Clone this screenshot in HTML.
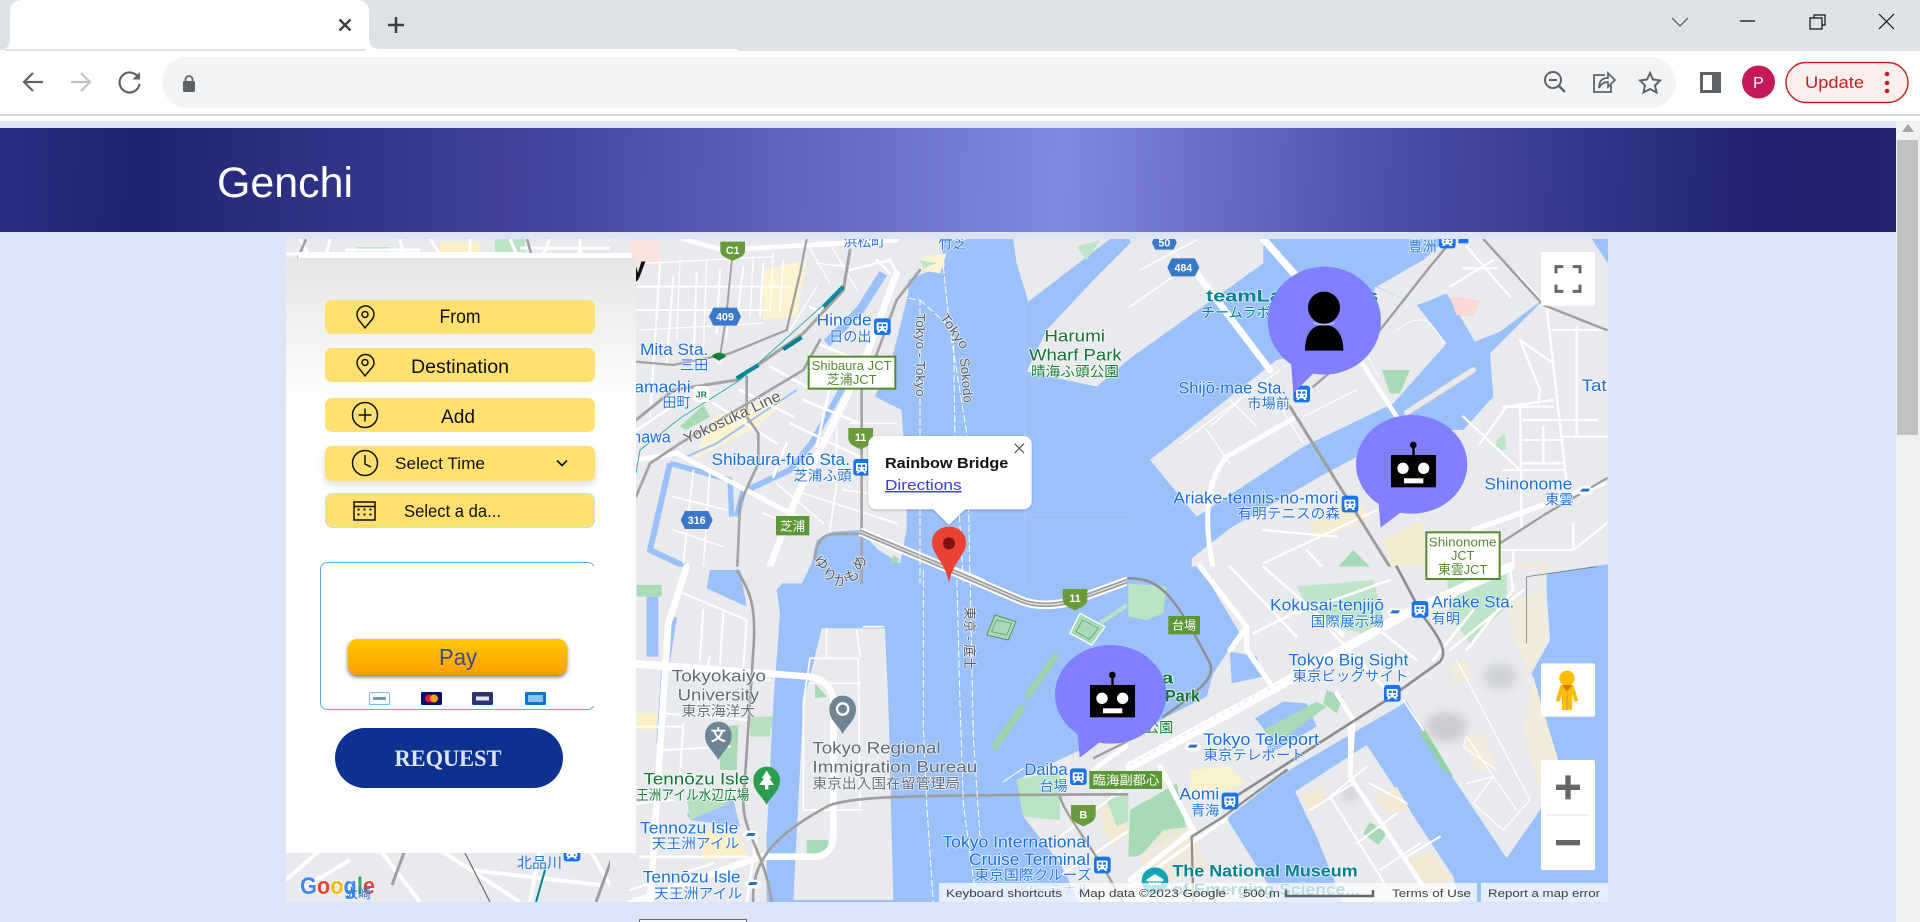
<!DOCTYPE html>
<html lang="en"><head><meta charset="utf-8"><title>Genchi</title>
<style>
html,body{margin:0;padding:0;width:1920px;height:922px;overflow:hidden;background:#dce4f8}
svg{position:absolute;left:0;top:0;display:block}
text{font-family:"Liberation Sans","Noto Sans CJK JP",sans-serif}
.l text{paint-order:stroke;stroke:#fff;stroke-width:5px;stroke-opacity:.7;stroke-linejoin:round}
.b{fill:#1a6fdc;font-size:50px}.bj{fill:#2a78d8;font-size:43px}
.g{fill:#137333;font-size:50px}.gj{fill:#188038;font-size:43px}
.gr{fill:#5f6b76;font-size:50px}.grj{fill:#66717c;font-size:43px}
.t{fill:#00838f;font-size:50px;font-weight:bold}
.sh{fill:#fff;font-size:32px;font-weight:bold;text-anchor:middle;stroke:none!important}
.rl{fill:#5c5c5c;font-size:40px}
.j{fill:#558b2f;font-size:40px;text-anchor:middle}
.lb{fill:#111;font-size:19px;-webkit-text-stroke:.4px #111;text-anchor:middle}
</style></head><body>
<svg width="1920" height="922" viewBox="0 0 1920 922" xmlns="http://www.w3.org/2000/svg">
<defs>
<clipPath id="mc"><rect x="286" y="239" width="1322" height="663"/></clipPath>
<filter id="bl" x="-50%" y="-50%" width="200%" height="200%"><feGaussianBlur stdDeviation="14"/></filter>
<filter id="ps" x="-20%" y="-20%" width="140%" height="150%"><feDropShadow dx="0" dy="2" stdDeviation="3" flood-color="#000" flood-opacity=".3"/></filter>
<filter id="ts" x="-10%" y="-30%" width="120%" height="170%"><feDropShadow dx="0" dy="3" stdDeviation="4" flood-color="#000" flood-opacity=".14"/></filter>
<filter id="pys" x="-10%" y="-20%" width="120%" height="160%"><feDropShadow dx="0" dy="2" stdDeviation="2" flood-color="#000" flood-opacity=".55"/></filter>
<linearGradient id="hg" gradientUnits="userSpaceOnUse" x1="0" y1="128" x2="1896" y2="190">
<stop offset="0" stop-color="#2b2f82"/><stop offset=".075" stop-color="#1e2371"/><stop offset=".3" stop-color="#45489f"/><stop offset=".56" stop-color="#8088e0"/><stop offset=".73" stop-color="#4d50a8"/><stop offset=".93" stop-color="#1e2270"/><stop offset="1" stop-color="#21256f"/></linearGradient>
<linearGradient id="pg" x1="0" y1="0" x2="0" y2="1"><stop offset="0" stop-color="#e5e5e5"/><stop offset=".25" stop-color="#fff"/></linearGradient>
<linearGradient id="py" x1="0" y1="0" x2="0" y2="1"><stop offset="0" stop-color="#ffc900"/><stop offset="1" stop-color="#ff9d00"/></linearGradient>
<g id="st"><rect x="-25" y="-25" width="50" height="50" rx="9" fill="#1a73e8"/><path d="M-13,-13h26a3,3 0 013,3v17a5,5 0 01-5,5l4,6h-7l-3,-5h-11l-3,5h-7l4,-6a5,5 0 01-5,-5v-17a3,3 0 013,-3z" fill="#fff"/><rect x="-11" y="-8" width="9" height="7" fill="#1a73e8"/><rect x="2" y="-8" width="9" height="7" fill="#1a73e8"/><circle cx="-8" cy="6" r="3" fill="#1a73e8"/><circle cx="8" cy="6" r="3" fill="#1a73e8"/></g>
<g id="mono"><ellipse rx="24" ry="14" fill="#fff"/><path d="M-15,3L-8,-6H15L10,3Z" fill="#2a6fc9"/></g>
<path id="shg" d="M-37,-28H37V2C37,22 16,28 0,36C-16,28 -37,22 -37,2Z" fill="#6a9a3c"/>
<path id="hex" d="M-35,-27H35L48,0L35,27H-35L-48,0Z" fill="#3a78c9"/>
<g id="robot"><ellipse cx="845" cy="703" rx="167" ry="148" fill="#8080ff"/><path d="M745,810L752,893L815,845Z" fill="#8080ff"/><rect x="783" y="675" width="135" height="97" fill="#000"/><rect x="847" y="645" width="7" height="32" fill="#000"/><circle cx="850" cy="645" r="10" fill="#000"/><circle cx="819" cy="715" r="17" fill="#fff"/><circle cx="881" cy="715" r="17" fill="#fff"/><rect x="822" y="745" width="58" height="15" fill="#fff"/></g>
</defs>

<rect width="1920" height="922" fill="#dce4f8"/>
<!-- browser chrome -->
<rect width="1920" height="51" fill="#dee1e6"/>
<path d="M0,50 Q10,50 10,38 V12 Q10,0 22,0 H357 Q369,0 369,12 V38 Q369,49 380,49 H736 L740,51 H0Z" fill="#fff"/>
<rect y="49" x="5" width="360" height="2" fill="#dee1e6"/>
<rect y="51" width="1920" height="63" fill="#fff"/>
<rect y="114" width="1920" height="2" fill="#dadada"/>
<rect y="116" width="1920" height="5" fill="#fff"/>
<path d="M339.500,19.500L350.500,30.500M350.500,19.500L339.500,30.500" stroke="#3c4043" stroke-width="2.400"/>
<path d="M396,17V33M388,25H404" stroke="#3c4043" stroke-width="2.600"/>
<path d="M1672,18L1680,26L1688,18" fill="none" stroke="#444" stroke-width="1"/>
<path d="M1740,21H1755" stroke="#111" stroke-width="1.300"/>
<path d="M1814,18V15H1825V25H1822M1810,18H1822V29H1810Z" fill="none" stroke="#111" stroke-width="1.200"/>
<path d="M1879,14L1894,29M1894,14L1879,29" stroke="#111" stroke-width="1.200"/>
<rect x="162" y="57" width="1514" height="51" rx="25.500" fill="#f1f3f4"/>
<path d="M43,82H24M33,73L24,82L33,91" fill="none" stroke="#5f6368" stroke-width="2.200"/>
<path d="M71,82H90M81,73L90,82L81,91" fill="none" stroke="#bdc1c6" stroke-width="2.200"/>
<path d="M138,77A10,10 0 1 0 139.500,84" fill="none" stroke="#5f6368" stroke-width="2.200"/><path d="M140,72V79.500H132.500Z" fill="#5f6368"/>
<rect x="183" y="81" width="12" height="11" rx="1.500" fill="#5f6368"/><path d="M185.500,81V79.500a3.500,3.500 0 017,0V81" fill="none" stroke="#5f6368" stroke-width="1.800"/>
<circle cx="1553" cy="80" r="8" fill="none" stroke="#5f6368" stroke-width="2"/><path d="M1559,86L1565,92" stroke="#5f6368" stroke-width="2.400"/><path d="M1549,80H1557" stroke="#5f6368" stroke-width="2"/>
<path d="M1605,75H1594V92H1611V85" fill="none" stroke="#5f6368" stroke-width="1.800"/><path d="M1599,88C1599,80 1603,78 1608,78V73L1615,80L1608,87V82C1604,82 1601,84 1599,88Z" fill="none" stroke="#5f6368" stroke-width="1.700"/>
<path d="M1650,73L1653,79.500L1660,80.500L1655,85.500L1656.500,92.500L1650,89L1643.500,92.500L1645,85.500L1640,80.500L1647,79.500Z" fill="none" stroke="#5f6368" stroke-width="2"/>
<rect x="1700" y="72" width="21" height="21" fill="#5f6368"/><rect x="1703" y="75" width="9" height="15" fill="#fff"/>
<circle cx="1758.500" cy="82" r="16.500" fill="#c5185a"/><text x="1758.500" y="88" text-anchor="middle" fill="#fff" font-size="16">P</text>
<rect x="1786" y="62.500" width="122" height="40" rx="20" fill="#fbeeec" stroke="#c5221f" stroke-width="1.400"/>
<text x="1805" y="88" fill="#c5221f" font-size="17" textLength="59" lengthAdjust="spacingAndGlyphs">Update</text>
<circle cx="1887" cy="74" r="2.300" fill="#c5221f"/><circle cx="1887" cy="83" r="2.300" fill="#c5221f"/><circle cx="1887" cy="91" r="2.300" fill="#c5221f"/>

<!-- header -->
<rect y="128" width="1896" height="104" fill="url(#hg)"/>
<text x="217" y="197" fill="#fff" font-size="43" style="-webkit-text-stroke:.7px #fff" textLength="136" lengthAdjust="spacingAndGlyphs">Genchi</text>
<!-- scrollbar -->
<rect x="1896" y="121" width="24" height="801" fill="#f1f1f1"/>
<rect x="1897" y="140" width="21" height="295" fill="#c1c1c1"/>
<path d="M1908,124L1914,132H1902Z" fill="#a3a3a3"/>

<!-- MAP -->
<g clip-path="url(#mc)">
<rect x="286" y="239" width="1322" height="663" fill="#9cc0f9"/>

<!-- map strip above panel -->
<rect x="286" y="239" width="360" height="24" fill="#e8eaed"/>
<path d="M357,247H390V255H357ZM495,239H525V252H495Z" fill="#b9e3c3"/><path d="M440,242H480V256H440Z" fill="#fbefc8"/>
<g fill="none" stroke="#fff" stroke-width="3"><path d="M300,239L312,262M330,239L325,262M345,250H420M400,239L405,262M430,239L445,262M470,239V262M510,239L520,262M550,239L540,262M580,239V262M610,239L625,262M286,254H360M520,248H640"/></g>
<path d="M306,239L298,258M527,239L533,260" stroke="#9e9e9e" stroke-width="2.500" fill="none"/>

<!-- left-bottom strip under panel -->
<rect x="286" y="840" width="360" height="70" fill="#e8eaed"/>
<g fill="none" stroke="#fff" stroke-width="4"><path d="M286,880L320,850M380,850L420,902M440,850L520,902M470,870L600,885M540,850L530,902M590,850L620,902M300,890L350,860"/><path d="M405,850L392,885" stroke="#9e9e9e" stroke-width="3"/><path d="M615,850L596,902" stroke="#9e9e9e" stroke-width="3"/></g>
<path d="M465,853L490,902" stroke="#6c6c6c" stroke-width="1.200" fill="none"/>
<path d="M545,870L536,902" stroke="#00838f" stroke-width="2" fill="none"/>

<!-- Z5 -->
<g transform="translate(630 230) scale(.33333)">
<path d="M-60,20H930L945,110L880,130L835,150L835,190L790,370L735,500L815,540L820,620L830,840L830,900L810,1000L745,960L690,900L610,905L560,930L545,1000L515,1060H-60Z" fill="#e8eaed"/>
<path d="M1150,27H1440L1195,215L1160,100Z" fill="#e8eaed"/>
<path d="M1250,300L1400,140L1500,40V27H1900V100L1500,385L1400,470L1190,425Z" fill="#e8eaed"/>
<path d="M250,560L490,490L380,590L190,690ZM400,120L530,90L500,260L400,270ZM880,80L950,70L930,130L870,120Z" fill="#fef3d0"/>
<path d="M150,590L220,525L240,560L170,600ZM790,975L810,990L780,1005Z" fill="#a8dab5"/>
<path d="M1340,50L1410,30L1370,90ZM870,90L920,100L880,115Z" fill="#bfe5c8"/>
<path d="M0,20H90V110H0Z" fill="#f8e3df"/>
<g fill="none" stroke="#9cc0f9" stroke-linejoin="round"><path d="M120,700L60,960L230,1040" stroke-width="18"/><path d="M120,700L300,750L305,860" stroke-width="16"/><path d="M640,470L545,640L480,720L340,785L320,860" stroke-width="18"/><path d="M760,130L690,240L590,340" stroke-width="26"/><path d="M500,480L260,640L170,680" stroke-width="6"/></g>
<g fill="none" stroke="#fff" stroke-linecap="round">
<path d="M800,130L700,400L500,800L400,1060" stroke-width="20"/><path d="M18,690L140,670L500,860" stroke-width="15"/>
<path d="M160,27L280,60L800,30" stroke-width="14"/><path d="M90,100L60,560M18,240H420M130,140L110,400M200,130L190,400M270,120L260,310M340,110L320,280M400,100L390,260M460,90L450,240M18,170H480" stroke-width="6"/>
<path d="M40,100L430,80M30,300L400,280M150,90L140,330M230,90L220,360M300,90L290,330M370,80L360,260M430,70L420,240M530,40L600,160M560,100L660,110M600,40L680,180M480,300L560,170" stroke-width="4"/>
<path d="M660,120L780,90L800,130M740,90L780,130M560,340L760,420M520,510L690,580M600,470L560,650M480,580L690,680M470,640L430,740M250,520L440,640M330,480L490,560M420,410L530,470M20,600L170,500M540,230L640,280" stroke-width="8"/>
<path d="M620,560L620,720M520,790L800,880M620,760L600,900M130,800L290,840M190,720L160,1000M240,720L220,1010M440,760L580,880M400,850L520,900M720,680L820,680M730,760L820,760M130,900L280,950M640,780L800,800M660,580L800,580" stroke-width="5"/>
</g>
<g fill="none" stroke="#a3a3a3" stroke-linecap="round">
<path d="M308,60L290,250L270,380" stroke-width="6"/><path d="M530,27L510,130L470,300L300,370L130,405L18,395" stroke-width="7"/>
<path d="M18,570L130,480L320,450L520,310L640,180L660,60" stroke-width="9"/><path d="M350,440L350,560L385,610L385,700L330,820L320,1060" stroke-width="8"/>
<path d="M870,120L800,210L730,400L695,480L695,1060" stroke-width="8"/><path d="M18,800L60,700L150,640L370,510L520,420L570,330" stroke-width="8"/>
<path d="M700,912H610C570,915 555,950 555,990" stroke-width="8"/>
</g>
<g fill="none" stroke="#00838f" stroke-width="12"><path d="M580,230L640,170M320,445L385,405M460,358L515,322"/></g>
<path d="M18,730L30,660L150,565L330,450L640,170" fill="none" stroke="#13a2a8" stroke-width="2.500"/>
<path d="M690,905L1060,1060" stroke="#fff" stroke-width="26" fill="none"/><path d="M690,905L1060,1060" stroke="#9e9e9e" stroke-width="14" fill="none"/><path d="M690,905L1060,1060" stroke="#f2f2f2" stroke-width="3" fill="none"/>
<g fill="none" stroke="#fff" stroke-width="3" stroke-dasharray="22 8"><path d="M835,205L870,210L870,1060M870,210L970,300L975,620L1000,1060M940,110L960,300L1012,620L1020,1060"/></g>
<path d="M1185,215V1060M0,855H1500" stroke="#fff" stroke-opacity=".18" stroke-width="2"/>
<use href="#shg" transform="translate(308 60) scale(1 .9)"/><text class="sh" x="308" y="72">C1</text>
<use href="#hex" x="285" y="260"/><text class="sh" x="285" y="272">409</text>
<use href="#hex" x="200" y="870"/><text class="sh" x="200" y="882">316</text>
<use href="#shg" transform="translate(692 622)"/><text class="sh" x="692" y="633">11</text>
<rect x="438" y="858" width="100" height="58" fill="#5d9636"/><text x="488" y="902" font-size="38" fill="#fff" text-anchor="middle">芝浦</text>
<rect x="536" y="380" width="260" height="96" fill="#fff" stroke="#558b2f" stroke-width="6"/>
<text class="j" x="665" y="420" textLength="240" lengthAdjust="spacingAndGlyphs">Shibaura JCT</text><text class="j" x="665" y="462" textLength="150" lengthAdjust="spacingAndGlyphs">芝浦JCT</text>
<path d="M245,378Q267,362 289,378L267,394Z" fill="#188038"/><circle cx="268" cy="392" r="12" fill="#fff" opacity=".6"/><path d="M245,378Q267,358 289,378L267,392Z" fill="#188038"/>
<rect x="190" y="468" width="48" height="48" rx="10" fill="#fff"/><text x="214" y="502" font-size="26" font-weight="bold" fill="#00875f" text-anchor="middle" stroke="none">JR</text>
<use href="#st" x="757" y="290"/><use href="#st" x="695" y="712"/>
<g class="l">
<text class="bj" x="640" y="50" textLength="125" lengthAdjust="spacingAndGlyphs">浜松町</text>
<text class="bj" x="925" y="55" textLength="85" lengthAdjust="spacingAndGlyphs">竹芝</text>
<text class="b" x="560" y="287" textLength="165" lengthAdjust="spacingAndGlyphs">Hinode</text>
<text class="bj" x="597" y="334" textLength="128" lengthAdjust="spacingAndGlyphs">日の出</text>
<text class="b" x="30" y="375" textLength="205" lengthAdjust="spacingAndGlyphs">Mita Sta.</text>
<text class="bj" x="150" y="420" textLength="85" lengthAdjust="spacingAndGlyphs">三田</text>
<text class="b" x="-25" y="488" textLength="207" lengthAdjust="spacingAndGlyphs">Hamachi</text>
<text class="bj" x="97" y="533" textLength="85" lengthAdjust="spacingAndGlyphs">田町</text>
<text class="b" x="-20" y="638" textLength="142" lengthAdjust="spacingAndGlyphs">anawa</text>
<text class="b" x="245" y="705" textLength="415" lengthAdjust="spacingAndGlyphs">Shibaura-futō Sta.</text>
<text class="bj" x="490" y="752" textLength="175" lengthAdjust="spacingAndGlyphs">芝浦ふ頭</text>
<text class="g" x="1243" y="335" textLength="182" lengthAdjust="spacingAndGlyphs">Harumi</text>
<text class="g" x="1197" y="392" textLength="278" lengthAdjust="spacingAndGlyphs">Wharf Park</text>
<text class="gj" x="1203" y="440" textLength="264" lengthAdjust="spacingAndGlyphs">晴海ふ頭公園</text>
<text class="rl" transform="translate(170 642) rotate(-25)" textLength="315" lengthAdjust="spacingAndGlyphs" style="font-size:46px">Yokosuka Line</text>
<text class="rl" transform="translate(858 250) rotate(90)" textLength="250" lengthAdjust="spacingAndGlyphs">Tokyo - Tokyo</text>
<text class="rl" transform="translate(928 262) rotate(55)" textLength="120" lengthAdjust="spacingAndGlyphs">Tokyo</text>
<text class="rl" transform="translate(990 385) rotate(85)" textLength="135" lengthAdjust="spacingAndGlyphs">Sokodo</text>
</g>
</g>

<!-- Z6 -->
<g transform="translate(1130 230) scale(.33333)">
<path d="M60,690L440,390L520,370L700,390L735,170L860,225L950,340L790,520L520,650L200,860Z" fill="#e8eaed"/>
<path d="M185,985L300,895L570,740L830,600L1000,600L1090,500L1080,370L1230,220L1060,27H1450V1000L1250,1030V1100H185Z" fill="#e8eaed"/>
<path d="M740,170L880,90L950,27H1060L1230,215L1110,305L1035,335L950,190L890,215L860,225Z" fill="#e8eaed"/>
<path d="M1385,27H1450V125Z" fill="#9cc0f9"/>
<path d="M830,548L1030,420" stroke="#d0d0d0" stroke-width="20" stroke-linecap="round"/>
<path d="M830,548L1030,420" stroke="#e8eaed" stroke-width="15" stroke-linecap="round"/>
<path d="M540,880L680,800L720,870L560,930ZM760,930L880,870L890,1060L800,1060Z" fill="#f5ecd2"/>
<path d="M670,960L770,1060H580Z" fill="#a8dab5"/><path d="M755,420H840L810,490H780Z" fill="#a8dab5"/><path d="M1100,630L1125,610L1130,660H1095Z" fill="#bde5c8"/>
<path d="M960,200L1050,210L1030,260L980,255Z" fill="#f9d7d3"/><path d="M1130,1000H1260L1240,1060H1130Z" fill="#f3ead4"/>
<g fill="none" stroke="#fff" stroke-linecap="round">
<path d="M400,27L500,140" stroke-width="22"/><path d="M690,390L800,560" stroke-width="14"/><path d="M200,130L420,420" stroke-width="20"/>
<path d="M260,1060C220,900 220,760 290,680L500,560" stroke-width="15"/>
<path d="M1250,230L1310,760M1270,300H1430M1170,330L1270,400M1170,330L1230,480L1225,520M1120,530H1270M1180,570H1400M1180,630H1300M1180,700H1300M1300,620H1430M1120,720L1300,720M1170,520L1175,900M1240,590V700M1050,640L1130,530L1270,510M1340,290V620" stroke-width="7"/>
<path d="M1030,900L1420,760" stroke-width="16"/><path d="M1110,960H1330L1430,880M1150,960V1040M1330,880V960M1000,560L1170,720" stroke-width="7"/>
<path d="M960,170L1090,90M1000,115H1100M1010,50L1140,200M1160,130L1260,240" stroke-width="7"/>
<path d="M400,900L620,920M400,1000L740,840M530,960L620,1060" stroke-width="7"/><path d="M30,120L200,30M0,230L200,90M100,30L260,210" stroke-width="5"/>
<path d="M520,560L680,480M150,640L450,420M230,600L300,700M420,480L520,640M300,510L380,590M240,590L330,510" stroke-width="4"/>
<path d="M745,440L700,350M940,340C900,260 870,250 800,300" stroke-width="3"/>
</g>
<g fill="none" stroke="#9e9e9e" stroke-linecap="round">
<path d="M480,530L810,1060" stroke-width="9"/><path d="M550,470L750,300L900,110L950,50" stroke-width="7"/>
<path d="M1060,27L1240,225L1430,300" stroke-width="7"/><path d="M1110,940L1250,850L1430,745" stroke-width="7"/>
</g>
<path d="M0,1030C80,1020 200,1040 240,1050" fill="none" stroke="#9e9e9e" stroke-width="7"/>
<use href="#hex" transform="translate(103 38) scale(.78)"/><text class="sh" x="103" y="50">50</text>
<use href="#hex" x="160" y="112"/><text class="sh" x="160" y="124">484</text>
<use href="#st" x="952" y="30"/><rect x="985" y="22" width="30" height="18" fill="#1a73e8"/>
<use href="#st" x="515" y="492"/><use href="#st" x="660" y="822"/>
<use href="#mono" x="1365" y="782"/>
<g class="l">
<text class="t" x="228" y="215" textLength="517" lengthAdjust="spacingAndGlyphs">teamLab Planets</text>
<text x="213" y="262" style="fill:#00838f;font-size:43px" textLength="420" lengthAdjust="spacingAndGlyphs">チームラボプラネッツ</text>
<text class="bj" x="835" y="65" textLength="85" lengthAdjust="spacingAndGlyphs">豊洲</text>
<text class="b" x="145" y="490" textLength="323" lengthAdjust="spacingAndGlyphs">Shijō-mae Sta.</text>
<text class="bj" x="352" y="535" textLength="128" lengthAdjust="spacingAndGlyphs">市場前</text>
<text class="b" x="130" y="820" textLength="495" lengthAdjust="spacingAndGlyphs">Ariake-tennis-no-mori</text>
<text class="bj" x="322" y="865" textLength="308" lengthAdjust="spacingAndGlyphs">有明テニスの森</text>
<text class="b" x="1063" y="778" textLength="264" lengthAdjust="spacingAndGlyphs">Shinonome</text>
<text class="bj" x="1245" y="823" textLength="85" lengthAdjust="spacingAndGlyphs">東雲</text>
<text class="b" x="1355" y="483" textLength="75" lengthAdjust="spacingAndGlyphs">Tat</text>
</g>
</g>

<!-- Z7 -->
<g transform="translate(630 570) scale(.33333)">
<path d="M-60,-10H500L440,60L450,130L430,400L410,800L410,1000H-60Z" fill="#e8eaed"/>
<path d="M575,175L765,175L775,400L790,990H490L520,400Z" fill="#e8eaed"/>
<path d="M1160,630L1340,545L1500,480V1000H1350L1290,880L1180,740Z" fill="#e8eaed"/>
<path d="M240,0H330L350,110L230,55Z" fill="#9cc0f9"/>
<path d="M50,80H85V260H50Z" fill="#9cc0f9"/>
<path d="M130,140L105,300L90,520" stroke="#9cc0f9" stroke-width="22" fill="none"/>
<path d="M170,730L310,690L330,770L180,750Z" fill="#9cc0f9" opacity=".9"/>
<path d="M20,45H95V80H20Z" fill="#a8dab5"/>
<path d="M270,470L325,465L320,600L270,600Z" fill="#a8dab5"/><path d="M360,440H430L420,500H360Z" fill="#b8e0c0"/><path d="M170,680L300,700L180,750Z" fill="#b8e0c0"/><path d="M555,340L590,380L555,385Z" fill="#a8dab5"/><path d="M530,810H595V850H530Z" fill="#a8dab5"/>
<path d="M20,430H80V480H20ZM210,780L330,800L350,860L220,870Z" fill="#fbefc8"/>
<path d="M1160,630L1290,600L1290,750L1180,740Z" fill="#b9e3c3"/><path d="M1400,720L1500,680V800L1440,830Z" fill="#f1e9d6"/><path d="M1430,690L1500,670V750L1460,770Z" fill="#b9e3c3"/>
<g fill="none" stroke="#fff" stroke-linecap="round">
<path d="M170,-10L115,160L60,1000" stroke-width="20"/><path d="M18,280L540,320C590,330 610,360 610,400V800C610,840 585,860 550,860H390L0,1000" stroke-width="20"/>
<path d="M160,70L350,150M220,120L210,270M280,130L270,280M350,150L340,290M20,290L420,330M100,430L350,450M20,470H160M160,460L150,620M240,260L230,300M100,540L300,530" stroke-width="6"/>
<path d="M540,265H685L690,710M590,175V265M680,180L690,260M540,340L690,340M540,265L520,400L520,720H695M700,170H760" stroke-width="5"/>
<path d="M20,700L130,690M0,960L250,880M30,860H350M380,790L350,1000" stroke-width="7"/>
<path d="M1290,800L1500,640M1300,910L1500,780" stroke-width="7"/><path d="M1390,600L1500,520" stroke-width="14"/>
<path d="M1120,635L1180,595" stroke-width="3"/>
</g>
<path d="M320,0C360,60 380,110 370,240L340,700C340,790 410,860 425,1000" fill="none" stroke="#9e9e9e" stroke-width="8"/>
<path d="M370,1000C360,870 440,790 600,705C680,680 800,675 1500,673" fill="none" stroke="#9e9e9e" stroke-width="8"/>
<path d="M1290,673C1290,720 1400,840 1480,1000" fill="none" stroke="#9e9e9e" stroke-width="7"/>
<path d="M1390,565L1500,510" fill="none" stroke="#9e9e9e" stroke-width="7"/>
<g fill="none" stroke="#fff" stroke-width="3" stroke-dasharray="22 8"><path d="M880,0V470L890,700L910,1000M980,0L990,400L1000,700L1040,1000M1020,0L1030,500L1050,800"/></g>
<path d="M960,0L1170,90C1210,108 1270,110 1330,92L1500,30" fill="none" stroke="#fff" stroke-width="26"/><path d="M960,0L1170,90C1210,108 1270,110 1330,92L1500,30" fill="none" stroke="#9e9e9e" stroke-width="14"/><path d="M960,0L1170,90C1210,108 1270,110 1330,92L1500,30" fill="none" stroke="#f2f2f2" stroke-width="3"/>
<path d="M1095,135L1158,155L1135,210L1070,195Z" fill="#a8dab5" stroke="#5d8a6b" stroke-width="3"/><path d="M1100,150L1145,160L1130,195L1085,185Z" fill="none" stroke="#5d8a6b" stroke-width="2"/>
<path d="M1350,130L1425,170L1385,225L1320,190Z" fill="#a8dab5" stroke="#fff" stroke-width="4"/><path d="M1358,150L1405,175L1378,208L1338,185Z" fill="none" stroke="#5d8a6b" stroke-width="2"/>
<path d="M1195,375L1275,260" stroke="#9fd5ad" stroke-width="20" stroke-linecap="round"/><path d="M1095,530L1175,415" stroke="#9fd5ad" stroke-width="20" stroke-linecap="round"/>
<path d="M1410,160L1500,100" stroke="#b9e3c3" stroke-width="12"/>
<use href="#shg" transform="translate(1335 85)"/><text class="sh" x="1335" y="96">11</text>
<use href="#shg" transform="translate(1360 733)"/><text class="sh" x="1360" y="745">B</text>
<path d="M265,570C250,540 225,530 225,495A40,40 0 0 1 305,495C305,530 280,540 265,570Z" fill="#6f8595"/><text x="265" y="512" font-size="46" fill="#fff" text-anchor="middle" font-weight="bold">文</text>
<path d="M638,492C623,462 598,452 598,417A40,40 0 0 1 678,417C678,452 653,462 638,492Z" fill="#6f8595"/><circle cx="638" cy="417" r="17" fill="none" stroke="#fff" stroke-width="7"/>
<path d="M410,705C395,675 370,665 370,630A40,40 0 0 1 450,630C450,665 425,675 410,705Z" fill="#2a9d4f"/><path d="M410,602L425,625H418L432,645H388L402,625H395ZM405,645H415V658H405Z" fill="#fff"/>
<use href="#st" x="1345" y="620"/><use href="#st" x="1417" y="885"/>
<use href="#mono" x="362" y="795"/><use href="#mono" x="368" y="942"/>
<g class="l">
<text class="gr" x="125" y="335" textLength="283" lengthAdjust="spacingAndGlyphs">Tokyokaiyo</text>
<text class="gr" x="143" y="392" textLength="244" lengthAdjust="spacingAndGlyphs">University</text>
<text class="grj" x="155" y="438" textLength="220" lengthAdjust="spacingAndGlyphs">東京海洋大</text>
<text class="gr" x="547" y="550" textLength="385" lengthAdjust="spacingAndGlyphs">Tokyo Regional</text>
<text class="gr" x="547" y="607" textLength="495" lengthAdjust="spacingAndGlyphs">Immigration Bureau</text>
<text class="grj" x="547" y="655" textLength="443" lengthAdjust="spacingAndGlyphs">東京出入国在留管理局</text>
<text class="g" x="40" y="643" textLength="318" lengthAdjust="spacingAndGlyphs">Tennōzu Isle</text>
<text class="gj" x="-20" y="690" textLength="378" lengthAdjust="spacingAndGlyphs">天王洲アイル水辺広場</text>
<text class="b" x="30" y="790" textLength="295" lengthAdjust="spacingAndGlyphs">Tennozu Isle</text>
<text class="bj" x="65" y="835" textLength="263" lengthAdjust="spacingAndGlyphs">天王洲アイル</text>
<text class="b" x="38" y="937" textLength="294" lengthAdjust="spacingAndGlyphs">Tennōzu Isle</text>
<text class="bj" x="72" y="985" textLength="265" lengthAdjust="spacingAndGlyphs">天王洲アイル</text>
<text class="rl" transform="translate(1005 110) rotate(90)" textLength="190" lengthAdjust="spacingAndGlyphs">東京 - 底土</text>
<text class="b" x="1183" y="615" textLength="130" lengthAdjust="spacingAndGlyphs">Daiba</text>
<text class="bj" x="1228" y="663" textLength="85" lengthAdjust="spacingAndGlyphs">台場</text>
<text class="b" x="937" y="832" textLength="443" lengthAdjust="spacingAndGlyphs">Tokyo International</text>
<text class="b" x="1017" y="885" textLength="363" lengthAdjust="spacingAndGlyphs">Cruise Terminal</text>
<text class="bj" x="1033" y="930" textLength="352" lengthAdjust="spacingAndGlyphs">東京国際クルーズ</text>
<text class="bj" x="1170" y="975" textLength="210" lengthAdjust="spacingAndGlyphs">ターミナル</text>
</g>
</g>

<!-- Z8 -->
<g transform="translate(1130 570) scale(.33333)">
<path d="M-5,-10H1245L1260,210L1205,310L1285,570L1230,720L1130,865L960,610L830,395L470,605L290,745L450,1000H-5Z" fill="#e8eaed"/>
<path d="M495,665L710,525L970,920L990,1000H640L560,800Z" fill="#e8eaed"/>
<path d="M-10,-10H210L330,190L250,310L230,380L110,440L-10,520Z" fill="#9cc0f9"/>
<path d="M300,245L380,260L400,320L305,340Z" fill="#9cc0f9"/>
<path d="M375,445L460,395L530,400L560,470L405,560L420,500Z" fill="#9cc0f9"/>
<path d="M-5,40L110,50L100,130L50,150L-5,140Z" fill="#b9e3c3"/>
<path d="M500,50L730,30L770,180L700,190L560,160Z" fill="#bfe5c8"/><path d="M950,10L1130,0L1130,110L1020,220L960,140Z" fill="#bfe5c8"/>
<path d="M400,480L560,395L590,410L440,520Z" fill="#a8dab5"/><path d="M590,360L640,380L620,430L580,400Z" fill="#a8dab5"/><path d="M720,755L770,790L745,825L700,790Z" fill="#a8dab5"/><path d="M880,470L970,620L940,600L870,490Z" fill="#8fd3a0"/>
<path d="M0,720L140,640L170,780L20,860L-5,860Z" fill="#a8dab5"/><path d="M30,860L100,780L180,770L240,900L40,950Z" fill="#f1e9d6" opacity=".9"/><path d="M180,600L300,590L350,640L180,690Z" fill="#fbf1cc"/>
<path d="M1130,100L1240,60L1250,210L1200,310L1150,200Z" fill="#f3ecdb"/><path d="M1210,320L1280,560L1240,700L1180,480Z" fill="#f3ecdb"/><path d="M1000,500L1060,490L1100,590L1040,610Z" fill="#f3ecdb"/><path d="M960,280L1010,270L1020,330L975,340Z" fill="#f3ecdb"/>
<path d="M510,680L580,640L590,690L540,730ZM730,670L800,650L840,720L770,730ZM820,870L900,840L970,930L880,950Z" fill="#f1e9d6"/>
<ellipse cx="950" cy="470" rx="60" ry="45" fill="#c9cbcf" filter="url(#bl)"/><ellipse cx="1110" cy="320" rx="50" ry="40" fill="#cfd1d5" filter="url(#bl)"/><ellipse cx="660" cy="670" rx="25" ry="30" fill="#d2d4d8" filter="url(#bl)"/>
<g fill="none" stroke="#fff" stroke-linecap="round">
<path d="M0,590L460,340L830,130L1140,-10" stroke-width="28"/><path d="M210,-10L350,170L350,240L420,340" stroke-width="16"/><path d="M350,170L300,240" stroke-width="16"/>
<path d="M0,950L290,745" stroke-width="10"/><path d="M90,590L190,780L0,930" stroke-width="16"/>
<path d="M620,370L670,450L660,620L880,950" stroke-width="14"/>
<path d="M300,-10L500,200M400,-10L640,200M600,180L760,350M760,190L860,270M500,130L780,30M370,190L530,110L640,190M910,270L1030,120M960,240L1180,60M1140,0L1150,60L1010,240" stroke-width="8"/>
<path d="M600,680L770,950M600,680L710,590M540,720L670,640M680,820L800,730M750,900L870,820M720,640L830,700M830,860L930,800" stroke-width="6"/>
<path d="M980,270L1200,690L1120,780L1030,700L1090,620L1010,500L1000,530L1100,600M1010,640L1090,620L1160,720" stroke-width="4"/>
<path d="M820,390L880,480" stroke-width="5"/><path d="M660,470V610" stroke-width="12"/>
</g>
<g fill="none" stroke="#8e8e8e" stroke-linecap="round">
<path d="M-5,25C90,25 130,70 240,280C250,310 245,340 100,440" stroke-width="7"/>
<path d="M300,690L770,390L930,275C950,250 940,215 880,140L800,-10" stroke-width="8"/>
<path d="M190,1000L185,800L280,740L470,600" stroke-width="7"/>
</g>
<path d="M0,585L300,420L450,340" fill="none" stroke="#d7d9dc" stroke-width="2" stroke-dasharray="12 14"/>
<path d="M1190,20V220M1190,20L1400,-10" stroke="#666" stroke-width="2" fill="none"/>
<rect x="115" y="138" width="95" height="55" fill="#5d9636"/><text x="162" y="178" font-size="36" fill="#fff" text-anchor="middle">台場</text>
<rect x="-122" y="603" width="218" height="54" fill="#5d9636"/><text x="-112" y="644" font-size="38" fill="#fff" textLength="200" lengthAdjust="spacingAndGlyphs">臨海副都心</text>
<use href="#st" x="870" y="118"/><use href="#st" x="787" y="370"/><use href="#st" x="300" y="693"/>
<use href="#mono" x="795" y="127"/><use href="#mono" x="188" y="530"/>
<circle cx="75" cy="932" r="40" fill="#12a5b5"/><path d="M50,928L75,912L100,928V934H50ZM55,938H95V945H55Z" fill="#fff"/><path d="M60,936V944M70,936V944M80,936V944M90,936V944" stroke="#fff" stroke-width="3"/>
<g class="l">
<text class="g" x="95" y="340" font-weight="bold" textLength="35" lengthAdjust="spacingAndGlyphs">a</text>
<text class="g" x="105" y="395" font-weight="bold" textLength="105" lengthAdjust="spacingAndGlyphs">Park</text>
<text class="gj" x="45" y="488" textLength="85" lengthAdjust="spacingAndGlyphs">公園</text>
<text class="b" x="420" y="122" textLength="342" lengthAdjust="spacingAndGlyphs">Kokusai-tenjijō</text>
<text class="bj" x="542" y="170" textLength="220" lengthAdjust="spacingAndGlyphs">国際展示場</text>
<text class="b" x="905" y="112" textLength="248" lengthAdjust="spacingAndGlyphs">Ariake Sta.</text>
<text class="bj" x="905" y="160" textLength="85" lengthAdjust="spacingAndGlyphs">有明</text>
<text class="b" x="475" y="287" textLength="360" lengthAdjust="spacingAndGlyphs">Tokyo Big Sight</text>
<text class="bj" x="487" y="333" textLength="348" lengthAdjust="spacingAndGlyphs">東京ビッグサイト</text>
<text class="b" x="220" y="525" textLength="347" lengthAdjust="spacingAndGlyphs">Tokyo Teleport</text>
<text class="bj" x="220" y="570" textLength="305" lengthAdjust="spacingAndGlyphs">東京テレポート</text>
<text class="b" x="148" y="688" textLength="120" lengthAdjust="spacingAndGlyphs">Aomi</text>
<text class="bj" x="183" y="737" textLength="85" lengthAdjust="spacingAndGlyphs">青海</text>
<text class="t" x="127" y="920" textLength="556" lengthAdjust="spacingAndGlyphs">The National Museum</text>
<text class="t" x="127" y="975" textLength="563" lengthAdjust="spacingAndGlyphs">of Emerging Science...</text>
</g>
</g>

<!-- JCT box (Shinonome), curved railway label -->
<g transform="translate(1130 230) scale(.33333)">
<rect x="889" y="907" width="220" height="140" fill="#fff" stroke="#558b2f" stroke-width="6"/>
<text class="j" x="998" y="950" textLength="203" lengthAdjust="spacingAndGlyphs">Shinonome</text><text class="j" x="998" y="990" textLength="70" lengthAdjust="spacingAndGlyphs">JCT</text><text class="j" x="998" y="1032" textLength="148" lengthAdjust="spacingAndGlyphs">東雲JCT</text>
</g>
<g transform="translate(630 230) scale(.33333)" class="l" text-anchor="middle">
<text class="rl" style="font-size:44px" transform="translate(562 1008) rotate(50)">ゆ</text>
<text class="rl" style="font-size:44px" transform="translate(592 1048) rotate(25)">り</text>
<text class="rl" style="font-size:44px" transform="translate(632 1066)">か</text>
<text class="rl" style="font-size:44px" transform="translate(672 1050) rotate(-25)">も</text>
<text class="rl" style="font-size:44px" transform="translate(700 1008) rotate(-50)">め</text>
</g>

<!-- attribution -->
<rect x="939" y="883" width="538" height="19" fill="#fff" fill-opacity=".72"/><rect x="1481" y="883" width="127" height="19" fill="#fff" fill-opacity=".72"/>
<text x="946" y="897" font-size="11" fill="#3c4043" textLength="116" lengthAdjust="spacingAndGlyphs">Keyboard shortcuts</text>
<text x="1079" y="897" font-size="11" fill="#3c4043" textLength="147" lengthAdjust="spacingAndGlyphs">Map data ©2023 Google</text>
<text x="1243" y="897" font-size="11" fill="#3c4043" textLength="37" lengthAdjust="spacingAndGlyphs">500 m</text>
<path d="M1286,890V896H1373V890" fill="none" stroke="#666" stroke-width="2.500"/>
<text x="1392" y="897" font-size="11" fill="#3c4043" textLength="79" lengthAdjust="spacingAndGlyphs">Terms of Use</text>
<text x="1488" y="897" font-size="11" fill="#3c4043" textLength="112" lengthAdjust="spacingAndGlyphs">Report a map error</text>

<!-- bubbles -->
<g transform="translate(1130 230) scale(.33333)">
<ellipse cx="583" cy="272" rx="170" ry="162" fill="#8080ff"/><path d="M483,395L490,490L550,430Z" fill="#8080ff"/>
<circle cx="582" cy="233" r="48" fill="#000"/><path d="M525,362C525,320 540,285 582,285C624,285 640,320 640,362Z" fill="#000"/>
<path d="M550,278Q582,292 614,278" fill="none" stroke="#fff" stroke-width="2"/>
<use href="#robot"/>
</g>
<g transform="translate(1130 230) scale(.33333) translate(-903 690)"><use href="#robot"/></g>

<!-- popup + pin -->
<g transform="translate(630 230) scale(.33333)">
<path d="M957,890C930,890 906,908 906,938C906,975 945,995 957,1058C969,995 1008,975 1008,938C1008,908 984,890 957,890Z" fill="#ea4335"/><circle cx="957" cy="940" r="18" fill="#7f1210"/>
<path d="M739,618H1181A24,24 0 0 1 1205,642V814A24,24 0 0 1 1181,838H1005L957,885L910,838H739A24,24 0 0 1 715,814V642A24,24 0 0 1 739,618Z" fill="#fff" filter="url(#ps)"/>
<text x="765" y="714" font-size="44" font-weight="bold" fill="#111" textLength="370" lengthAdjust="spacingAndGlyphs">Rainbow Bridge</text>
<text x="765" y="780" font-size="44" fill="#3a3ae8" text-decoration="underline" textLength="230" lengthAdjust="spacingAndGlyphs">Directions</text>
<path d="M1154,641L1182,669M1182,641L1154,669" stroke="#555" stroke-width="3.500"/>
</g>

<!-- map controls -->
<g transform="translate(1130 570) scale(.33333)">
<rect x="1233" y="-954" width="162" height="161" rx="6" fill="#fff"/>
<path d="M1278,-890V-910H1300M1328,-910H1350V-890M1350,-856V-836H1328M1300,-836H1278V-856" fill="none" stroke="#666" stroke-width="9"/>
<rect x="1233" y="280" width="162" height="160" rx="6" fill="#fff"/>
<circle cx="1311" cy="325" r="23" fill="#fbbc04"/>
<path d="M1292,345H1330L1345,392L1334,396L1327,372L1326,420H1296L1295,372L1288,396L1277,392Z" fill="#fbbc04"/><path d="M1296,345L1311,365L1326,345Z" fill="#e37400"/><path d="M1311,370V420" stroke="#c98a00" stroke-width="2"/>
<rect x="1233" y="570" width="162" height="330" rx="6" fill="#fff"/>
<path d="M1278,652H1350M1314,616V688" stroke="#666" stroke-width="16"/>
<rect x="1250" y="733" width="125" height="4" fill="#e6e6e6"/>
<rect x="1278" y="810" width="72" height="16" fill="#666"/>
</g>
<!-- black letter next to panel -->
<text x="630" y="276" font-size="28" font-weight="bold" fill="#111">y</text>
<!-- Google -->
<text x="300" y="894" font-size="24" font-weight="bold" stroke="#fff" stroke-width="2" stroke-opacity=".5" style="paint-order:stroke" textLength="75" lengthAdjust="spacingAndGlyphs"><tspan fill="#4285f4">G</tspan><tspan fill="#ea4335">o</tspan><tspan fill="#fbbc05">o</tspan><tspan fill="#4285f4">g</tspan><tspan fill="#34a853">l</tspan><tspan fill="#ea4335">e</tspan></text>
<text x="517" y="868" font-size="14.500" fill="#2a78d8" textLength="45" lengthAdjust="spacingAndGlyphs">北品川</text>
<use href="#st" transform="translate(572 853) scale(.33333)"/>
<text x="345" y="898" font-size="13" fill="#2a78d8">大崎</text>
</g>

<!-- PANEL -->
<rect x="298" y="252" width="224" height="8" fill="#fff"/><rect x="522" y="253" width="110" height="7" fill="#fff"/>
<path d="M286,263a5,5 0 015,-5H631a5,5 0 015,5V853H286Z" fill="url(#pg)"/>
<g transform="translate(280 240)">
<rect x="45" y="60" width="270" height="34" rx="7" fill="#ffe070"/>
<rect x="45" y="108" width="270" height="34" rx="7" fill="#ffe070"/>
<rect x="45" y="158" width="270" height="34" rx="7" fill="#ffe070"/>
<rect x="45" y="206" width="270" height="35" rx="7" fill="#ffe070" filter="url(#ts)"/>
<rect x="45.500" y="253.500" width="269" height="34" rx="7" fill="#ffe070" stroke="#bfe0ee" stroke-width="1"/>
<text class="lb" x="180" y="83" textLength="41" lengthAdjust="spacingAndGlyphs">From</text>
<text class="lb" x="180" y="133" textLength="98" lengthAdjust="spacingAndGlyphs">Destination</text>
<text class="lb" x="178" y="183" textLength="34" lengthAdjust="spacingAndGlyphs">Add</text>
<text x="115" y="229" font-size="17" fill="#111" style="-webkit-text-stroke:.4px #111" textLength="90" lengthAdjust="spacingAndGlyphs">Select Time</text>
<text x="124" y="277" font-size="17.500" fill="#111" style="-webkit-text-stroke:.4px #111" textLength="97" lengthAdjust="spacingAndGlyphs">Select a da...</text>
<g fill="none" stroke="#111" stroke-width="1.500">
<path d="M85,88C80,81 77,79 77,74.500A8.500,8.500 0 0 1 94,74.500C94,79 90,81 85,88Z"/><circle cx="85" cy="74.500" r="3"/>
<path d="M85,136C80,129 77,127 77,123A8.500,8.500 0 0 1 94,123C94,127 90,129 85,136Z"/><circle cx="85" cy="122.500" r="3"/>
<circle cx="85" cy="175" r="12.500"/><path d="M85,168.500V181.500M78.500,175H91.500"/>
<circle cx="85" cy="223" r="12.500"/><path d="M85,215V224L91,227"/>
<rect x="74" y="262" width="21" height="18"/><path d="M74,266.500H95"/>
<path d="M277,220.500L282,225.500L287,220.500" stroke-width="1.600"/>
</g>
<g fill="#111"><rect x="77.500" y="268.500" width="2" height="2"/><rect x="83.500" y="268.500" width="2" height="2"/><rect x="89.500" y="268.500" width="2" height="2"/><rect x="77.500" y="273.500" width="2" height="2"/><rect x="83.500" y="273.500" width="2" height="2"/><rect x="89.500" y="273.500" width="2" height="2"/></g>
</g>
<!-- paypal frame -->
<path d="M594,566Q592,562.500 588,562.500H328Q320.500,562.500 320.500,570V702Q320.500,709.500 328,709.500H590L594,706" fill="none" stroke="#5aaee6" stroke-width="1"/>
<rect x="348" y="639" width="219" height="36" rx="9" fill="url(#py)" filter="url(#pys)"/>
<text x="458" y="665" text-anchor="middle" font-size="23" fill="#3b4d8f" textLength="38" lengthAdjust="spacingAndGlyphs">Pay</text>
<rect x="369.500" y="692.500" width="20" height="12" rx="1.500" fill="#fff" stroke="#8fb3d4" stroke-width="1"/><rect x="373" y="697" width="13" height="3" fill="#2f6ea8" opacity=".7"/>
<rect x="421" y="692" width="21" height="13" rx="1.500" fill="#0a0a6b"/><circle cx="429" cy="698.500" r="4" fill="#e21836"/><circle cx="434" cy="698.500" r="4" fill="#f79e1b"/>
<rect x="472" y="692" width="21" height="13" rx="1.500" fill="#2a3474"/><rect x="476" y="696.500" width="13" height="4" fill="#e8e8f2"/>
<rect x="525" y="692" width="21" height="13" rx="1.500" fill="#0f75c9"/><rect x="528" y="695" width="15" height="7" fill="#8fc4ee"/>
<!-- request -->
<rect x="335" y="728" width="228" height="60" rx="30" fill="#0c3191"/>
<text x="448" y="766" text-anchor="middle" font-size="23" font-weight="bold" fill="#dfe3ee" style="font-family:'Liberation Serif',serif;-webkit-text-stroke:.4px #dfe3ee" textLength="107" lengthAdjust="spacingAndGlyphs">REQUEST</text>
<!-- box at bottom -->
<rect x="639.500" y="919.500" width="107" height="8" fill="#f4f6fd" stroke="#666" stroke-width="1"/>
</svg>
</body></html>
